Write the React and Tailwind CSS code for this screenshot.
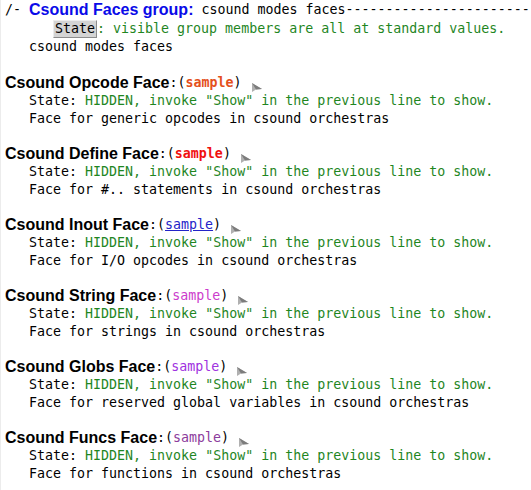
import React from 'react'

const mono = "font-['DejaVu_Sans_Mono',monospace] text-[13.3px]"
const sans = "font-['Liberation_Sans',Arial,sans-serif] font-bold text-[16px]"

const faces = [
  { name: 'Csound Opcode Face', sample: 'text-[#e4501c] font-bold', doc: 'Face for generic opcodes in csound orchestras' },
  { name: 'Csound Define Face', sample: 'text-[#f01010] font-bold', doc: 'Face for #.. statements in csound orchestras' },
  { name: 'Csound Inout Face', sample: 'text-[#2424c8] underline', doc: 'Face for I/O opcodes in csound orchestras' },
  { name: 'Csound String Face', sample: 'text-[#cc3ccc]', doc: 'Face for strings in csound orchestras' },
  { name: 'Csound Globs Face', sample: 'text-[#a032e0]', doc: 'Face for reserved global variables in csound orchestras' },
  { name: 'Csound Funcs Face', sample: 'text-[#8c3c9c]', doc: 'Face for functions in csound orchestras' },
]

const Pointer = () => (
  <svg width="12" height="10" viewBox="0 0 12 10" className="ml-[9px] mt-[9px] shrink-0">
    <polygon points="1,0 11,6 5,6.5 1,9" fill="#b0b0b0" />
    <polygon points="1,0 11,6 5,6.5" fill="#7c7c7c" />
  </svg>
)

const FaceBlock = ({ face }) => (
  <div>
    <div className="h-[18px] flex items-center pl-[4px] whitespace-nowrap">
      <span className={`${sans} text-black leading-[18px]`}>{face.name}</span>
      <span className={`${mono} text-black leading-[18px]`}>:(</span>
      <span className={`${mono} ${face.sample} leading-[18px]`}>sample</span>
      <span className={`${mono} text-black leading-[18px]`}>)</span>
      <Pointer />
    </div>
    <div className={`${mono} leading-[17.5px] h-[17.5px] pl-[28px] whitespace-nowrap`}>
      <span className="text-black">State: </span>
      <span className="text-[#1f861f]">HIDDEN, invoke "Show" in the previous line to show.</span>
    </div>
    <div className={`${mono} leading-[17.5px] h-[17.5px] pl-[28px] whitespace-nowrap text-black`}>{face.doc}</div>
    <div className="h-[18px]" />
  </div>
)

export default function App() {
  return (
    <div className="w-[531px] h-[490px] bg-white overflow-hidden border-l border-[#ececec]">
      <div className="h-[20px] flex items-center pl-[4px] whitespace-nowrap overflow-hidden">
        <span className={`${mono} text-black`}>/-</span>
        <span className={`${sans} text-[#0a0ae8] ml-[8px] leading-[20px]`}>Csound Faces group:</span>
        <span className={`${mono} text-black`}>&nbsp;csound modes faces{'-'.repeat(60)}</span>
      </div>
      <div className={`${mono} h-[18px] leading-[18px] pl-[52px] whitespace-nowrap flex items-center`}>
        <span className="inline-block bg-[#d4d4d4] text-black px-[1px] leading-[16px] border border-t-[#ececec] border-l-[#ececec] border-b-[#8c8c8c] border-r-[#8c8c8c]">State</span>
        <span className="text-[#1f861f]">: visible group members are all at standard values.</span>
      </div>
      <div className={`${mono} h-[18px] leading-[18px] pl-[28px] text-black`}>csound modes faces</div>
      <div className="h-[18px]" />
      {faces.map((f) => (
        <FaceBlock key={f.name} face={f} />
      ))}
    </div>
  )
}
